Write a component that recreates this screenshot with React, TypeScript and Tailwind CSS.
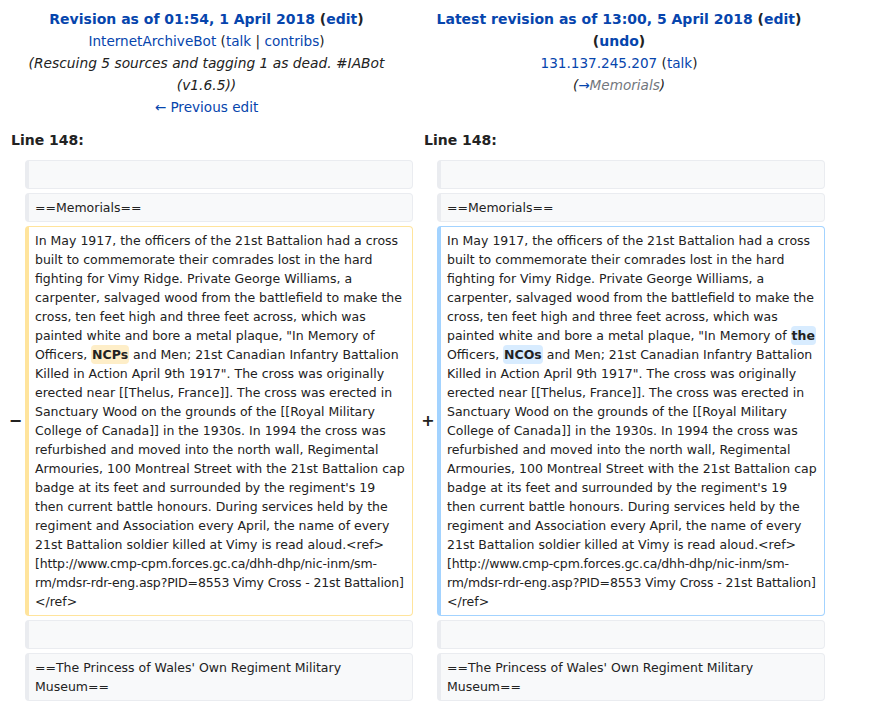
import React from "react";

const font = { fontFamily: '"DejaVu Sans", sans-serif' };

function Box({
  kind,
  children,
}: {
  kind: "ctx" | "del" | "add";
  children?: React.ReactNode;
}) {
  const cls =
    kind === "ctx"
      ? "bg-[#f8f9fa] border-[#eaecf0]"
      : kind === "del"
      ? "bg-white border-[#ffe49c]"
      : "bg-white border-[#a3d3ff]";
  return (
    <div
      className={`border border-l-4 rounded-[4px] px-[6px] py-[4px] text-[12.5px] leading-[19px] text-[#222222] break-words ${cls}`}
    >
      {children ?? <br />}
    </div>
  );
}

function Marker({ sign }: { sign?: string }) {
  return (
    <div className="flex items-center justify-center pl-[6px] text-[16px] font-bold text-[#222222]">
      {sign}
    </div>
  );
}

const Del = ({ children }: { children: React.ReactNode }) => (
  <span className="font-bold bg-[#feeec8] rounded-[4px] px-[1px] py-[2px]">{children}</span>
);
const Ins = ({ children }: { children: React.ReactNode }) => (
  <span className="font-bold bg-[#d8ecff] rounded-[4px] px-[1px] py-[2px]">{children}</span>
);

const partA =
  "In May 1917, the officers of the 21st Battalion had a cross built to commemorate their comrades lost in the hard fighting for Vimy Ridge. Private George Williams, a carpenter, salvaged wood from the battlefield to make the cross, ten feet high and three feet across, which was painted white and bore a metal plaque, \"In Memory of ";
const partB =
  " and Men; 21st Canadian Infantry Battalion Killed in Action April 9th 1917\". The cross was originally erected near [[Thelus, France]]. The cross was erected in Sanctuary Wood on the grounds of the [[Royal Military College of Canada]] in the 1930s. In 1994 the cross was refurbished and moved into the north wall, Regimental Armouries, 100 Montreal Street with the 21st Battalion cap badge at its feet and surrounded by the regiment's 19 then current battle honours. During services held by the regiment and Association every April, the name of every 21st Battalion soldier killed at Vimy is read aloud.<ref>";

const Tail = () => (
  <>
    {partB}
    <span className="tracking-[-0.13px]">
      [http://www.cmp-cpm.forces.gc.ca/dhh-dhp/nic-inm/sm-rm/mdsr-rdr-eng.asp?PID=8553 Vimy Cross - 21st Battalion]
    </span>
    <wbr />
    {"</ref>"}
  </>
);

export default function App() {
  return (
    <div className="w-[874px] h-[705px] bg-white overflow-hidden" style={font}>
      <div className="grid grid-cols-[25px_388px_24px_388px] gap-y-[4px] text-[#222222]">
        {/* Header left */}
        <div className="col-span-2 text-center text-[13.6px] leading-[22px] pt-[8px] px-[4px]">
          <div className="font-bold text-[14px]">
            <span className="text-[#0645ad]">Revision as of 01:54, 1 April 2018</span> (
            <span className="text-[#0645ad]">edit</span>)
          </div>
          <div>
            <span className="text-[#0645ad]">InternetArchiveBot</span> (
            <span className="text-[#0645ad]">talk</span> |{" "}
            <span className="text-[#0645ad]">contribs</span>)
          </div>
          <div className="italic text-[13.8px] text-[#222222] px-[20px]">
            (Rescuing 5 sources and tagging 1 as dead. #IABot (v1.6.5))
          </div>
          <div className="text-[#0645ad]">← Previous edit</div>
        </div>
        {/* Header right */}
        <div className="col-span-2 text-center text-[13.6px] leading-[22px] pt-[8px] px-[4px]">
          <div className="font-bold text-[14px]">
            <span className="text-[#0645ad]">Latest revision as of 13:00, 5 April 2018</span> (
            <span className="text-[#0645ad]">edit</span>){" "}
            <span>
              (<span className="text-[#0645ad]">undo</span>)
            </span>
          </div>
          <div>
            <span className="text-[#0645ad]">131.137.245.207</span> (
            <span className="text-[#0645ad]">talk</span>)
          </div>
          <div className="italic">
            (<span className="text-[#0645ad]">→</span>
            <span className="text-[#72777d]">Memorials</span>)
          </div>
        </div>

        {/* Line numbers */}
        <div className="col-span-2 pl-[11px] pt-[7px] pb-[5px] text-[14px] leading-[22px] font-bold">
          Line 148:
        </div>
        <div className="col-span-2 pl-[11px] pt-[7px] pb-[5px] text-[14px] leading-[22px] font-bold">
          Line 148:
        </div>

        {/* empty context */}
        <Marker />
        <Box kind="ctx" />
        <Marker />
        <Box kind="ctx" />

        {/* memorials */}
        <Marker />
        <Box kind="ctx">==Memorials==</Box>
        <Marker />
        <Box kind="ctx">==Memorials==</Box>

        {/* changed paragraph */}
        <Marker sign="−" />
        <Box kind="del">
          {partA}
          {"Officers, "}
          <Del>NCPs</Del>
          <Tail />
        </Box>
        <Marker sign="+" />
        <Box kind="add">
          {partA}
          <Ins>the</Ins>
          {" Officers, "}
          <Ins>NCOs</Ins>
          <Tail />
        </Box>

        {/* empty context */}
        <Marker />
        <Box kind="ctx" />
        <Marker />
        <Box kind="ctx" />

        {/* princess */}
        <Marker />
        <Box kind="ctx">==The Princess of Wales' Own Regiment Military Museum==</Box>
        <Marker />
        <Box kind="ctx">==The Princess of Wales' Own Regiment Military Museum==</Box>
      </div>
    </div>
  );
}
